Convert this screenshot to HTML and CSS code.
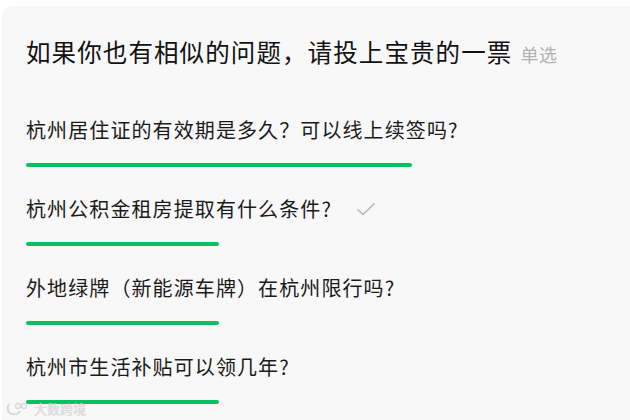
FILE: index.html
```html
<!DOCTYPE html>
<html lang="zh-CN">
<head>
<meta charset="utf-8">
<link rel="stylesheet" href="styles.css">
</head>
<body>
<div class="page">
  <div class="card">
    <h1 class="title">如果你也有相似的问题，请投上宝贵的一票<span class="tag">单选</span></h1>
    <ul class="options">
      <li class="option">
        <div class="label">杭州居住证的有效期是多久？可以线上续签吗?</div>
        <div class="bar" style="width:386px"></div>
      </li>
      <li class="option">
        <div class="label">杭州公积金租房提取有什么条件?<svg class="check" width="20" height="14" viewBox="0 0 20 14"><path d="M1.5 7.5 L7 12.5 L18.5 1.5" fill="none" stroke="#b5b5b5" stroke-width="1.6"/></svg></div>
        <div class="bar" style="width:193px"></div>
      </li>
      <li class="option">
        <div class="label">外地绿牌（新能源车牌）在杭州限行吗?</div>
        <div class="bar" style="width:193px"></div>
      </li>
      <li class="option">
        <div class="label">杭州市生活补贴可以领几年?</div>
        <div class="bar" style="width:193px"></div>
      </li>
    </ul>
  </div>
  <div class="watermark">
    <svg width="26" height="14" viewBox="0 0 26 14"><path d="M3 2 C1 5 1 11 6 12 C10 13 13 11 14 9" fill="none" stroke="#d8d8d8" stroke-width="2"/><circle cx="12" cy="4" r="2.5" fill="none" stroke="#d8d8d8" stroke-width="1.3"/><circle cx="18" cy="4" r="2.5" fill="none" stroke="#d8d8d8" stroke-width="1.3"/></svg>
    <span>大数跨境</span>
  </div>
</div>
</body>
</html>
```
FILE: styles.css
```css
html, body {
  margin: 0;
  padding: 0;
  background: #ffffff;
  overflow: hidden;
}
.page {
  position: relative;
  width: 630px;
  height: 420px;
  padding: 6px 0 0 2px;
  box-sizing: border-box;
  overflow: hidden;
  font-family: "Noto Sans CJK SC", "Noto Sans", sans-serif;
}
.card {
  width: 628px;
  height: 414px;
  background: #f8f8f8;
  border-radius: 10px 0 0 0;
  padding: 30px 0 0 24px;
  box-sizing: border-box;
}
.title {
  margin: 0;
  font-size: 24.5px;
  font-weight: 400;
  line-height: 32px;
  color: #111111;
  letter-spacing: 1.1px;
  display: flex;
  align-items: baseline;
}
.tag {
  font-size: 18px;
  color: #b2b2b2;
  margin-left: 8px;
  letter-spacing: 0.5px;
}
.options {
  list-style: none;
  margin: 45px 0 0 0;
  padding: 0;
  display: flex;
  flex-direction: column;
  gap: 27px;
}
.option {
  display: flex;
  flex-direction: column;
  gap: 18px;
}
.label {
  font-size: 20px;
  line-height: 30px;
  color: #1a1a1a;
  letter-spacing: 1.1px;
  display: flex;
  align-items: center;
}
.check {
  margin-left: 24px;
}
.bar {
  height: 4px;
  border-radius: 2px;
  background: #07c160;
}
.watermark {
  position: absolute;
  left: 6px;
  top: 401px;
  display: flex;
  align-items: center;
  gap: 2px;
  color: #e0e0e0;
  font-size: 13px;
  line-height: 16px;
  text-shadow: 0 0 1px #c8c8c8;
}
```
